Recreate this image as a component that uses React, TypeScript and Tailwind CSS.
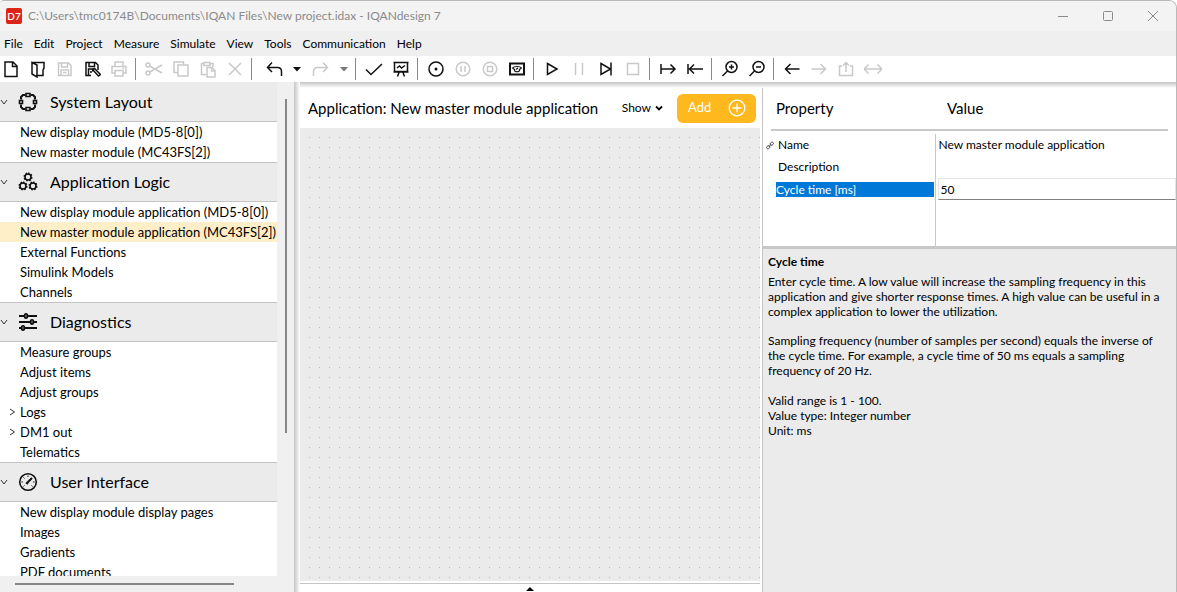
import type { ReactNode } from "react"

type IconProps = { children: ReactNode; muted?: boolean; label: string; className?: string }

type Section = { title: string; icon: ReactNode; items: TreeItem[] }
type TreeItem = { name: string; selected?: boolean; expandable?: boolean }

const menus = ["File", "Edit", "Project", "Measure", "Simulate", "View", "Tools", "Communication", "Help"]

const Tool = ({ children, muted, label, className = "" }: IconProps) => (
    <button aria-label={label} disabled={muted} className={`shrink-0 ${muted ? "text-[#c9c9c9]" : "text-[#111]"} ${className}`}>
        <svg viewBox="0 0 18 18" className="block size-[18px]" fill="none" stroke="currentColor" strokeWidth="1.5">
            {children}
        </svg>
    </button>
)

const Divider = () => <div className="ml-[7px] mr-[9px] h-[22px] w-px shrink-0 bg-[#8a8a8a]" />

const Group = ({ children }: { children: ReactNode }) => <div className="flex items-center gap-[9px]">{children}</div>

const Caret = ({ label, muted }: { label: string; muted?: boolean }) => (
    <button aria-label={label} className={muted ? "ml-[10px] text-[#777]" : "ml-[10px] text-[#111]"}>
        <svg viewBox="0 0 8 5" className="block h-[5px] w-2" fill="currentColor"><path d="M0 0h8L4 4.5z" /></svg>
    </button>
)

const Toolbar = () => (
    <div className="flex h-[26px] shrink-0 items-center bg-white pl-[2px]">
        <Group>
            <Tool label="New"><path d="M3 2h8l4 4v10.5H3zM10.5 2v4.5H15" /></Tool>
            <Tool label="Open"><path d="M3 2.5 8 5v12l-5-3zM3 2.5h12V8l-1 2v5.5H8" /></Tool>
            <Tool label="Save" muted><path d="M2.5 3h10L15 5.500V15.500H2.500zM5.500 3v4h6V3M5 15.500V10h7.500v5.500M7 12.500h3.500" /></Tool>
            <Tool label="Save as">
                <path d="M8 15.500H3V2.500h9.500l2.500 2.500v5M6 2.500v4h5.500v-4M5.500 15V9h6" />
                <path d="m9.500 9.500 6 6.500 2-1.500-6-6zM9.500 9.500l2-1M9.300 9.300l.7 2.200M7 12h2" />
            </Tool>
            <Tool label="Print" muted><path d="M5 6V2h8v4M5 13H2V6.500h14V13h-3M5 10.500h8V16H5zM12.500 8.500H14" /></Tool>
        </Group>
        <Divider />
        <Group>
            <Tool label="Cut" muted>
                <circle cx="3" cy="5" r="2" /><circle cx="3" cy="13" r="2" /><path d="M4.800 6 17 13M4.800 12 17 5" />
            </Tool>
            <Tool label="Copy" muted><path d="M6 5h10v11H6zM6 12.500H2V2h9.500v3" /></Tool>
            <Tool label="Paste" muted><path d="M7 14.500H2.500V3.500H5M11 3.500h3V7M5 2.500h6v3H5zM8 7.500h5l3 3V17H8zM12.500 7.500V11H16" /></Tool>
            <Tool label="Delete" muted><path d="m3 3 12 12M15 3 3 15" /></Tool>
        </Group>
        <Divider />
        <Tool label="Undo" className="ml-1"><path d="M7 2.500 2.500 7.500 7 12M2.500 7.500h10c2.500 0 4 1.500 4 4V16" /></Tool>
        <Caret label="Undo history" />
        <Tool label="Redo" muted className="ml-[11px]"><path d="m11 2.500 4.500 5-4.500 4.500M15.500 7.500h-10c-2.500 0-4 1.500-4 4V16" /></Tool>
        <Caret label="Redo history" muted />
        <Divider />
        <Group>
            <Tool label="Check"><path d="m1 9.500 5 5L17 4" /></Tool>
            <Tool label="Measure board">
                <path d="M1.500 2.500h15M2.500 2.500v9h13v-9M1.500 12h15M7 12.500 5.500 16.500M11 12.500l1.500 4M5 8l2.500-2 2 2L13 5.500" />
            </Tool>
        </Group>
        <Divider />
        <Group>
            <Tool label="Record"><circle cx="9" cy="9" r="7" /><circle cx="9" cy="9" r="1.500" fill="currentColor" stroke="none" /></Tool>
            <Tool label="Pause log" muted><circle cx="9" cy="9" r="6.800" /><path d="M7 6v6M11 6v6" /></Tool>
            <Tool label="Stop log" muted><circle cx="9" cy="9" r="6.800" /><path d="M6.500 6.500h5v5h-5z" /></Tool>
            <Tool label="Display view">
                <path strokeWidth="2" d="M2 3.500h14v11H2z" /><path d="M4.500 8c1.500-2 7.500-2 9 0l-2 1.500c1 3-6 3-5 0zM8 9.500 10 8" strokeWidth="1.200" />
            </Tool>
        </Group>
        <Divider />
        <Group>
            <Tool label="Play"><path d="M4.500 3.500 14 9l-9.500 5.500z" /></Tool>
            <Tool label="Pause" muted><path d="M5.500 3v12M12.500 3v12" /></Tool>
            <Tool label="Step"><path d="M4 3.500 13.500 9 4 14.500zM14 2.500v13" /></Tool>
            <Tool label="Stop" muted><path d="M3.500 3.500h11v11h-11z" /></Tool>
        </Group>
        <Divider />
        <Group>
            <Tool label="Go to end"><path d="M2 4v10M2 9h14M11.500 4.500 16 9l-4.500 4.500" /></Tool>
            <Tool label="Go to start"><path d="M2 4v10M3 9h14M8 4.500 3.500 9 8 13.500" /></Tool>
        </Group>
        <Divider />
        <Group>
            <Tool label="Zoom in"><circle cx="10.500" cy="7" r="5.500" /><path d="m6.500 11-5 5M8 7h5M10.500 4.500v5" /></Tool>
            <Tool label="Zoom out"><circle cx="10.500" cy="7" r="5.500" /><path d="m6.500 11-5 5M8 7h5" /></Tool>
        </Group>
        <Divider />
        <Group>
            <Tool label="Back"><path d="M2.500 9h14M7.500 4 2.500 9l5 5" /></Tool>
            <Tool label="Forward" muted><path d="M1.500 9h14M10.500 4l5 5-5 5" /></Tool>
            <Tool label="Up" muted><path d="M5 6H2.500v9.500h13V6H13M9 12V3M6 5.500l3-3 3 3" /></Tool>
            <Tool label="Between" muted><path d="M0 9h18M4.500 4.500 0 9l4.500 4.500M13.500 4.500 18 9l-4.500 4.500" /></Tool>
        </Group>
    </div>
)

const sections: Section[] = [
    {
        title: "System Layout",
        icon: (
            <>
                <path strokeWidth="2" d="M7.500 3H5L3 5v2.500M12.500 3H15L17 5v2.500M3 12.500V15L5 17h2.500M17 12.500V15L15 17h-2.500" />
                <path d="M8 1.500h4v3H8zM8 15.500h4v3H8zM1.500 8.500h3v3h-3zM15.500 8.500h3v3h-3z" />
            </>
        ),
        items: [{ name: "New display module (MD5-8[0])" }, { name: "New master module (MC43FS[2])" }],
    },
    {
        title: "Application Logic",
        icon: (
            <>
                <circle cx="10" cy="5" r="3" /><circle cx="5" cy="14" r="3" /><circle cx="15" cy="14" r="3" />
                <path strokeWidth="1.700" strokeDasharray="1.500 1.400" d="M10 1.300a3.700 3.700 0 1 1 0 7.400 3.700 3.700 0 1 1 0-7.400M5 10.300a3.700 3.700 0 1 1 0 7.400 3.700 3.700 0 1 1 0-7.400M15 10.300a3.700 3.700 0 1 1 0 7.400 3.700 3.700 0 1 1 0-7.400" />
            </>
        ),
        items: [
            { name: "New display module application (MD5-8[0])" },
            { name: "New master module application (MC43FS[2])", selected: true },
            { name: "External Functions" },
            { name: "Simulink Models" },
            { name: "Channels" },
        ],
    },
    {
        title: "Diagnostics",
        icon: (
            <>
                <path d="M1 4h18M1 10h18M1 16h18" strokeWidth="2" />
                <g fill="#777"><ellipse cx="8" cy="4" rx="1.500" ry="2.200" /><ellipse cx="14" cy="10" rx="1.500" ry="2.200" /><ellipse cx="5" cy="16" rx="1.500" ry="2.200" /></g>
            </>
        ),
        items: [
            { name: "Measure groups" },
            { name: "Adjust items" },
            { name: "Adjust groups" },
            { name: "Logs", expandable: true },
            { name: "DM1 out", expandable: true },
            { name: "Telematics" },
        ],
    },
    {
        title: "User Interface",
        icon: (
            <>
                <circle cx="10" cy="10" r="8.300" />
                <path d="m9 11 5-5M8 10.500l2 1.500" strokeWidth="2" />
                <path d="M10 3.500v1.500M3.500 10H5M15 10h1.500M5.500 5.500l1 1M5.500 14.500l1-1M14.500 14.500l-1-1" strokeWidth="1" />
            </>
        ),
        items: [
            { name: "New display module display pages" },
            { name: "Images" },
            { name: "Gradients" },
            { name: "PDF documents" },
        ],
    },
]

const Sidebar = () => (
    <nav className="flex w-[294px] shrink-0 flex-col bg-[#f0f0f0]">
        <div className="flex min-h-0 flex-1">
            <div className="w-[277px] overflow-hidden bg-white">
                {sections.map((section, index) => (
                    <div key={section.title}>
                        <button className={`flex h-10 w-full items-center border-y border-b-[#c4c4c4] bg-[#ebebeb] text-left text-[16px] ${index === 0 ? "border-t-[#ebebeb]" : "border-t-[#c4c4c4]"}`}>
                            <svg viewBox="0 0 8 8" className="size-2" fill="none" stroke="#333"><path d="m1 2 3 4 3-4" /></svg>
                            <svg viewBox="0 0 20 20" className="ml-[10px] size-5" fill="none" stroke="#111" strokeWidth="1.600">{section.icon}</svg>
                            <span className="ml-3">{section.title}</span>
                        </button>
                        <ul>
                            {section.items.map((item) => (
                                <li key={item.name} className={item.selected ? "bg-[#ffefc9]" : ""}>
                                    <button className="flex h-5 w-full items-center text-[13px] leading-5 whitespace-nowrap">
                                        <span className="flex w-5 shrink-0 justify-center pl-1">
                                            {item.expandable && (
                                                <svg viewBox="0 0 8 8" className="size-2" fill="none" stroke="#333"><path d="m2 1 4.500 3L2 7" /></svg>
                                            )}
                                        </span>
                                        {item.name}
                                    </button>
                                </li>
                            ))}
                        </ul>
                    </div>
                ))}
            </div>
            <div className="flex flex-1 justify-center pt-[17px]">
                <div className="h-[334px] w-[2px] bg-[#868686]" />
            </div>
        </div>
        <div className="flex h-4 items-center pl-[15px]">
            <div className="h-[2px] w-[219px] bg-[#868686]" />
        </div>
    </nav>
)

const Editor = () => (
    <main className="flex min-w-0 flex-1 flex-col pr-[2px]">
        <div className="flex h-10 shrink-0 items-center pl-2 pr-1">
            <h1 className="flex-1 text-[15px] whitespace-nowrap">Application: New master module application</h1>
            <button className="flex items-center gap-1 text-[12px]">
                Show
                <svg viewBox="0 0 8 8" className="size-2" fill="none" stroke="#000" strokeWidth="1.800"><path d="m1 2.500 3 3 3-3" /></svg>
            </button>
            <button className="ml-[14px] flex h-[29px] w-[79px] items-center justify-between rounded-md bg-[#ffb81e] pl-[11px] pr-[10px] text-[13px] text-white">
                Add
                <svg viewBox="0 0 18 18" className="size-[18px]" fill="none" stroke="currentColor" strokeWidth="1.300">
                    <circle cx="9" cy="9" r="7.800" /><path d="M9 4.500v9M4.500 9h9" />
                </svg>
            </button>
        </div>
        <div className="min-h-0 flex-1 bg-[#ebebeb] bg-[conic-gradient(at_1px_1px,transparent_270deg,#93c7cb_0)] bg-size-[10px_10px] bg-position-[9px_9px]" />
        <div className="mt-[2px] flex h-[9px] shrink-0 items-end justify-center border-t border-[#c4c4c4]">
            <button aria-label="Show messages">
                <svg viewBox="0 0 8 4" className="mb-px block h-1 w-2"><path d="M0 4 4 0l4 4z" /></svg>
            </button>
        </div>
    </main>
)

const PropertyTable = () => (
    <div className="h-[158px] shrink-0">
        <table className="h-full w-full table-fixed border-collapse text-left text-[12px]">
            <colgroup><col className="w-[172px]" /><col /></colgroup>
            <thead>
                <tr className="h-[43px] text-[15px]">
                    <th className="p-0 pl-2 font-normal"><div className="flex h-[43px] items-center border-b-2 border-[#c8c8c8] pl-[5px]">Property</div></th>
                    <th className="p-0 pr-2 font-normal"><div className="flex h-[43px] items-center border-b-2 border-[#c8c8c8] pl-3">Value</div></th>
                </tr>
            </thead>
            <tbody>
                <tr className="h-[3px]"><td colSpan={2} className="p-0" /></tr>
                <tr className="h-[22px]">
                    <td className="p-0">
                        <div className="flex items-center gap-1 pl-[3px]">
                            <svg viewBox="0 0 9 9" className="h-[9px] w-2" fill="none" stroke="#444">
                                <rect x="4.500" y="1" width="4" height="3" rx="1.500" transform="rotate(-40 6.500 2.500)" />
                                <rect x=".5" y="5" width="4" height="3" rx="1.500" transform="rotate(-40 2.500 6.500)" />
                                <path d="m3 6 3-3" />
                            </svg>
                            Name
                        </div>
                    </td>
                    <td className="border-l border-[#c8c8c8] p-0 pl-[3px]">New master module application</td>
                </tr>
                <tr className="h-[22px]">
                    <td className="p-0 pl-[15px]">Description</td>
                    <td className="border-l border-[#c8c8c8] p-0" />
                </tr>
                <tr className="h-[22px]">
                    <td className="p-0 pl-[13px] pr-px">
                        <label htmlFor="cycle-time" className="block bg-[#0078d7] leading-[15px] text-white">Cycle time [ms]</label>
                    </td>
                    <td className="border-l border-[#c8c8c8] p-0 pl-[2px]">
                        <input id="cycle-time" defaultValue="50" className="block h-[22px] w-full border border-[#e6e6e6] border-b-[#808080] bg-white pl-[2px] outline-none" />
                    </td>
                </tr>
                <tr>
                    <td className="p-0" />
                    <td className="border-l border-[#c8c8c8] p-0" />
                </tr>
            </tbody>
        </table>
    </div>
)

const Properties = () => (
    <aside className="flex w-[414px] shrink-0 flex-col border-l border-[#c4c4c4]">
        <PropertyTable />
        <div className="flex-1 border-t-[3px] border-[#c8c8c8] bg-[#ebebeb] px-[5px] pt-[5px] text-[12px] leading-[15px]">
            <h2 className="font-bold">Cycle time</h2>
            <p className="mt-[5px]">
                Enter cycle time. A low value will increase the sampling frequency in this<br />
                application and give shorter response times. A high value can be useful in a<br />
                complex application to lower the utilization.
            </p>
            <p className="mt-[14px]">
                Sampling frequency (number of samples per second) equals the inverse of<br />
                the cycle time. For example, a cycle time of 50 ms equals a sampling<br />
                frequency of 20 Hz.
            </p>
            <p className="mt-[15px]">
                Valid range is 1 - 100.<br />
                Value type: Integer number<br />
                Unit: ms
            </p>
        </div>
    </aside>
)

const TitleBar = () => (
    <header className="flex h-[30px] shrink-0 items-center bg-[#f3f3f3] pl-[6px] text-[12px] text-[#8b8b8b]">
        <span className="flex size-4 items-center justify-center rounded-xs bg-[#dc2418] text-[10px] font-semibold text-white">D7</span>
        <span className="ml-[6px] flex-1">C:\Users\tmc0174B\Documents\IQAN Files\New project.idax - IQANdesign 7</span>
        <button aria-label="Minimize" className="flex w-[46px] justify-center"><svg viewBox="0 0 10 10" className="size-[10px]" stroke="currentColor"><path d="M0 5.500h10" /></svg></button>
        <button aria-label="Maximize" className="flex w-11 justify-center"><svg viewBox="0 0 10 10" className="size-[10px]" fill="none" stroke="currentColor"><rect x=".5" y=".5" width="9" height="9" rx="1" /></svg></button>
        <button aria-label="Close" className="flex w-[46px] justify-center"><svg viewBox="0 0 10 10" className="size-[10px]" stroke="currentColor"><path d="m0 0 10 10M10 0 0 10" /></svg></button>
    </header>
)

const App = () => {
    return (
        <div className="flex h-screen flex-col overflow-hidden rounded-tl-sm rounded-tr-lg border-t border-r border-[#b9b9b9] bg-white font-['Lato','Open_Sans',sans-serif] text-black">
            <TitleBar />
            <div className="flex h-[25px] shrink-0 items-center gap-[11px] bg-[#efefef] pl-1 text-[12px]">
                {menus.map((menu) => <button key={menu}>{menu}</button>)}
            </div>
            <Toolbar />
            <div className="flex min-h-0 flex-1">
                <Sidebar />
                {/* soft shadow along the left and top edge of the work area */}
                <div className="w-[6px] shrink-0 bg-linear-to-r from-[#c4c4c4] to-white" />
                <div className="flex min-w-0 flex-1 flex-col">
                    <div className="h-[6px] shrink-0 bg-linear-to-b from-[#c4c4c4] to-white" />
                    <div className="flex min-h-0 flex-1">
                        <Editor />
                        <Properties />
                    </div>
                </div>
            </div>
        </div>
    )
}

export default App
